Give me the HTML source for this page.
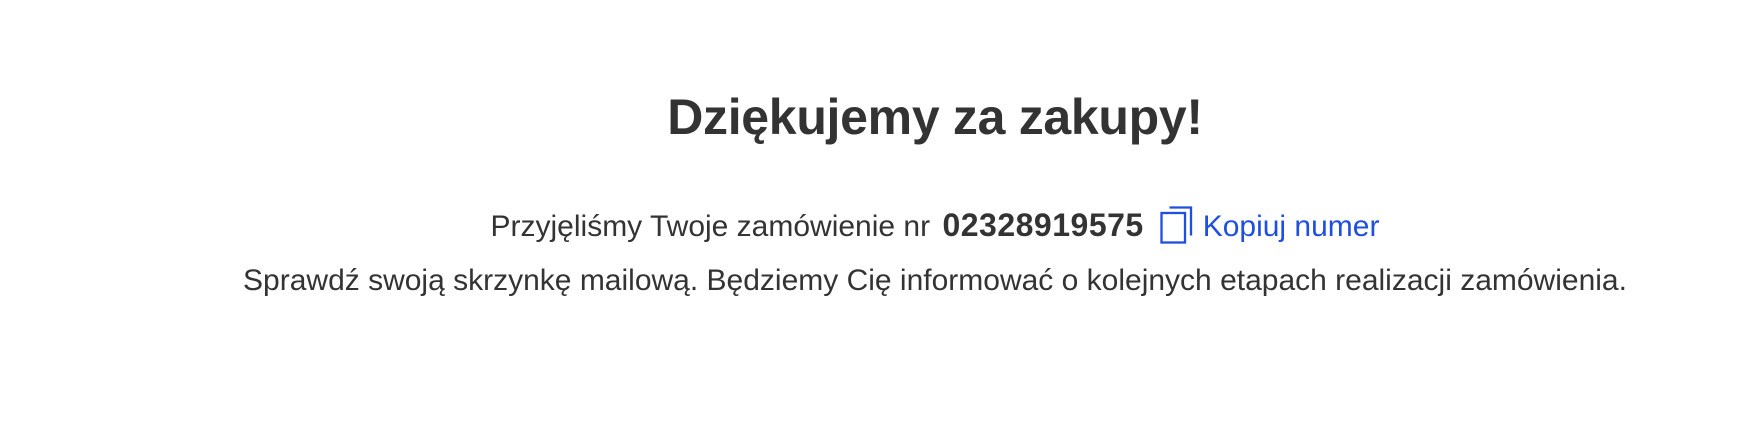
<!DOCTYPE html>
<html><head><meta charset="utf-8"><style>
html,body{margin:0;padding:0;background:#fff;width:1760px;height:438px;overflow:hidden}
.c{position:absolute;left:110px;width:1650px;text-align:center;color:#333;font-family:"Liberation Sans",sans-serif}
h1{position:absolute;top:87px;left:110px;width:1650px;margin:0;text-align:center;font:bold 50px/60px "Liberation Sans",sans-serif;color:#333;letter-spacing:-0.3px}
.l2{top:205px;font-size:30px;line-height:40px;white-space:nowrap}
.l3{top:261px;font-size:30px;line-height:40px;white-space:nowrap}
.num{font-weight:bold;font-size:32px;letter-spacing:0.5px;margin:0 16px 0 4px}
.k{color:#1f4fe0}
svg{vertical-align:-8px;margin-right:10px}
</style></head><body>
<h1>Dziękujemy za zakupy!</h1>
<div class="c l2">Przyjęliśmy Twoje zamówienie nr <span class="num">02328919575</span><svg width="33" height="38" viewBox="0 0 33 38"><path d="M9.5 1.5H31V29.5" fill="none" stroke="#1f4fe0" stroke-width="2.3"/><rect x="1.5" y="7" width="23.5" height="29.5" fill="none" stroke="#1f4fe0" stroke-width="2.3"/></svg><span class="k">Kopiuj numer</span></div>
<div class="c l3">Sprawdź swoją skrzynkę mailową. Będziemy Cię informować o kolejnych etapach realizacji zamówienia.</div>
</body></html>
